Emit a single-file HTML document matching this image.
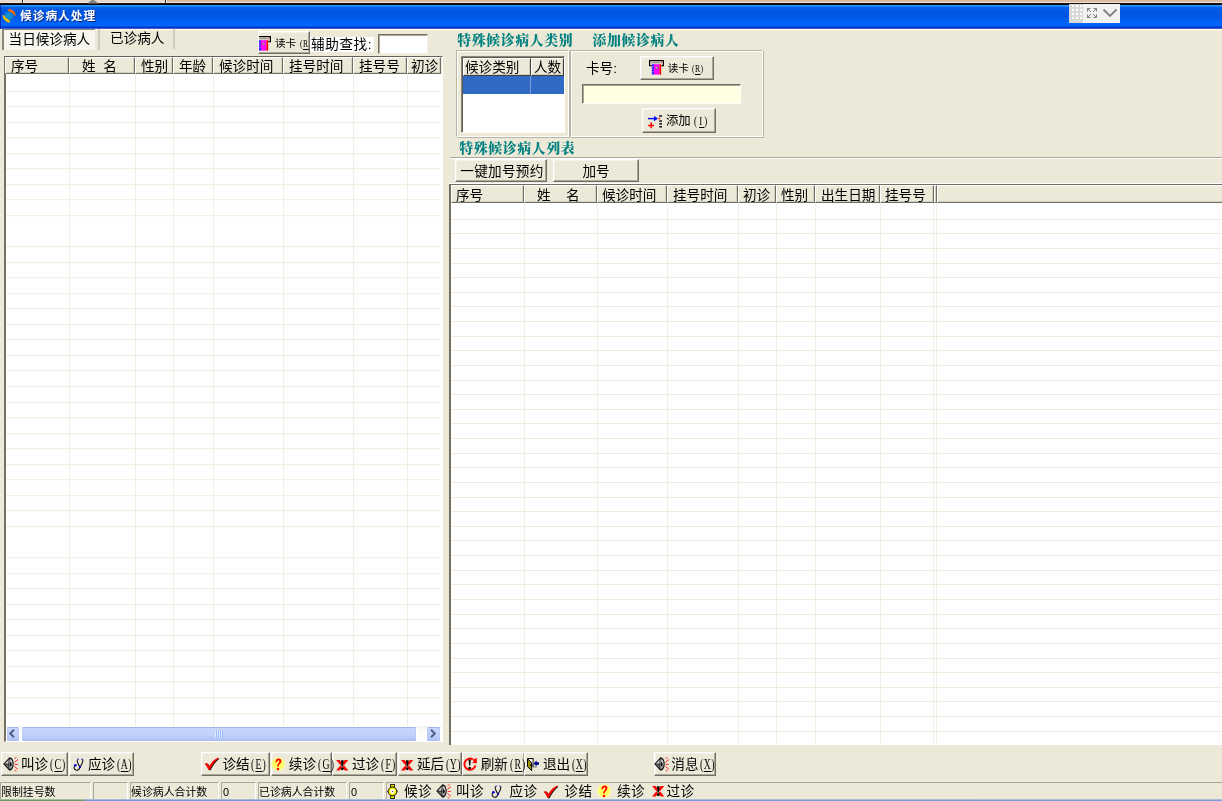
<!DOCTYPE html>
<html lang="zh-CN">
<head>
<meta charset="utf-8">
<title>候诊病人处理</title>
<style>
html,body{margin:0;padding:0;}
body{width:1222px;height:801px;overflow:hidden;background:#ece9d8;position:relative;
  font-family:"Liberation Sans","Noto Sans CJK SC",sans-serif;color:#000;}
#root{position:absolute;left:0;top:0;width:1222px;height:801px;will-change:transform;overflow:hidden;}
.abs{position:absolute;}
.t{position:absolute;white-space:nowrap;line-height:1;}
.f12{font-size:11.7px;}
.f14{font-size:13.6px;}
.lat{font-family:"Liberation Serif",serif;letter-spacing:1.6px;margin-left:1.7px;display:inline-block;transform:scaleX(0.72);transform-origin:0 50%;}
.lat u{text-decoration-thickness:1px;text-underline-offset:1.5px;}
#strip{left:0;top:0;width:1222px;height:5px;background:linear-gradient(#d8baa0 0,#d9bca3 1.5px,#f2e4d6 2px,#efdfd0 2.8px,#1a1410 3.4px,#000 4.4px,#0a1c50 5px);}
#titlebar{left:0;top:5px;width:1222px;height:24px;
  background:linear-gradient(#3a9cff 0,#2a8cfc 1px,#0664ec 2.2px,#0059e3 5px,#0055e0 10px,#005cec 14px,#0066fc 19px,#0066ff 20.6px,#0050e8 21.4px,#0034cc 22px,#0030c8 23px,#5a78d8 23.7px,#fff8dc 24px);}
#title{left:20px;top:10px;color:#fff;font-weight:bold;font-size:11.7px;letter-spacing:1px;text-shadow:1px 1px 0 #0a2a80;}
.btn{position:absolute;box-sizing:border-box;background:#ece9d8;overflow:hidden;
  border:1px solid;border-color:#fff #716f64 #716f64 #fff;
  box-shadow:inset -1px -1px 0 #aca899, inset 1px 1px 0 #f4f2e8;}
.hdr{position:absolute;box-sizing:border-box;background:#ece9d8;height:17px;
  border:1px solid;border-color:#fff #716f64 #716f64 #fff;box-shadow:inset -1px -1px 0 #d4d0bf;}
.sunk{position:absolute;box-sizing:border-box;border:1px solid;border-color:#716f64 #fff #fff #716f64;}
.vl{position:absolute;width:1px;background:#f1efe2;}
.grp{position:absolute;box-sizing:border-box;border:1px solid;border-color:#b8b5a2 #fff #fff #b8b5a2;
  box-shadow:inset 1px 1px 0 #fff, 1px 1px 0 #b8b5a2;}
.teal{color:#008080;font-weight:900;font-size:13.9px;letter-spacing:0.62px;font-family:"Liberation Serif","Noto Serif CJK SC",serif;}
.sp{position:absolute;box-sizing:border-box;top:782px;height:18px;border:1px solid;border-color:#aca899 #fff #fff #aca899;}
.sbtn{position:absolute;box-sizing:border-box;border:1px solid #fff;border-radius:2px;background:linear-gradient(#c9d6fb,#c3d2fd 50%,#b6c8f6 85%,#9db5ee);box-shadow:0 0 0 0.5px #b4c4f0 inset, 0 1px 0 #8aa3e0 inset;}
svg{position:absolute;overflow:visible;}
</style>
</head>
<body>
<div id="root">
<div class="abs" id="strip"></div>
<div class="abs" style="left:0px;top:0px;width:165px;height:3px;background:linear-gradient(#ecdcd0,#e6d3c4 55%,#f4e8dc 70%,#f0e0d2);"></div>
<div class="abs" style="left:22px;top:0px;width:1px;height:3.4px;background:#3a2e28;"></div>
<div class="abs" style="left:23px;top:0px;width:1px;height:3.2px;background:#fbf3ec;"></div>
<div class="abs" style="left:164.6px;top:0px;width:1.2px;height:3.4px;background:#3a2e28;"></div>
<div class="abs" style="left:165.8px;top:0px;width:1px;height:3.2px;background:#f4e6da;"></div>
<svg style="left:87px;top:0px;" width="12" height="4" viewBox="0 0 12 4"><path d="M0.4 3.6 L4.6 0 H7 L11.4 3.6 Z" fill="#848484"/></svg>
<div class="abs" id="titlebar"></div>
<div class="abs" style="left:0px;top:5px;width:1px;height:24px;background:rgba(0,10,120,0.55);"></div>
<div class="t" id="title">候诊病人处理</div>
<svg style="left:2px;top:8px;" width="15" height="15" viewBox="0 0 15 15"><defs><radialGradient id="gl" cx="45%" cy="50%" r="55%"><stop offset="0" stop-color="#08a4e0"/><stop offset="1" stop-color="#1068c8"/></radialGradient></defs>
<circle cx="7" cy="8" r="5.1" fill="url(#gl)"/>
<path d="M5.3 1.2 L9 1.3 L12.4 3.4 L14 7.8 L12.5 7.4 L10.6 5 L8 3.8 L6.4 3 Z" fill="#ff6a00"/>
<path d="M0.7 7 L1.7 7.1 L3.2 9.3 L5.2 10.7 L8 13 L7.9 14.4 L5 13.9 L2.2 11.5 L0.8 9 Z" fill="#ffc000"/></svg>
<div class="abs" style="left:1069px;top:4px;width:51px;height:19px;background:#f2f2f2;"></div>
<div class="abs" style="left:1069px;top:4px;width:14px;height:19px;background:#d9d9d9;"></div>
<svg style="left:1069px;top:4px;" width="51" height="19" viewBox="0 0 51 19"><g fill="#fff"><rect x="3" y="1" width="2" height="2"/><rect x="7" y="1" width="2" height="2"/><rect x="11" y="1" width="2" height="2"/>
<rect x="3" y="5" width="2" height="2"/><rect x="7" y="5" width="2" height="2"/><rect x="11" y="5" width="2" height="2"/>
<rect x="3" y="9" width="2" height="2"/><rect x="7" y="9" width="2" height="2"/><rect x="11" y="9" width="2" height="2"/>
<rect x="3" y="13" width="2" height="2"/><rect x="7" y="13" width="2" height="2"/><rect x="11" y="13" width="2" height="2"/></g>
<g stroke="#808080" stroke-width="1" fill="none">
<path d="M18.5 4.5 L22 8 M18.5 7.5 V4.5 H21.5 M27.5 4.5 L24 8 M24.5 4.5 H27.5 V7.5 M18.5 13.5 L22 10 M18.5 10.5 V13.5 H21.5 M27.5 13.5 L24 10 M27.5 10.5 V13.5 H24.5"/></g>
<path d="M34.5 5.5 L41 12 L47.5 5.5" stroke="#808080" stroke-width="1.8" fill="none"/></svg>
<div class="abs" style="left:95px;top:29px;width:1127px;height:1px;background:#fff8dc;"></div>
<div class="abs" style="left:95px;top:30px;width:1127px;height:1px;background:#f4f0de;"></div>
<div class="abs" style="left:2px;top:29px;width:93px;height:21px;background:#f6f5ee;border-left:2px solid #8b8878;border-top:1px solid #8b8878;box-sizing:border-box;"></div>
<div class="t f14" style="left:8.6px;top:33.3px;">当日候诊病人</div>
<div class="abs" style="left:98px;top:29px;width:2px;height:21px;background:#d0ccbc;"></div>
<div class="t f14" style="left:110px;top:31.8px;">已诊病人</div>
<div class="abs" style="left:173px;top:29px;width:1.5px;height:20px;background:#d0ccbc;"></div>
<div class="abs" style="left:4px;top:56px;width:439px;height:686px;box-sizing:border-box;border-left:2px solid #737166;border-top:1px solid #64625a;border-right:1px solid #fff;border-bottom:1px solid #fff;background:#fff;"></div>
<div class="abs" style="left:6px;top:76px;width:435px;height:650px;background:repeating-linear-gradient(to bottom,#fff 0,#fff 14.55px,#efecdd 14.55px,#efecdd 15.55px);background-position:0 0.2px;"></div>
<div class="abs" style="left:5px;top:57px;width:437px;height:17px;background:#ece9d8;"></div>
<div class="hdr" style="left:5px;top:57px;width:64px;height:17px;"></div>
<div class="hdr" style="left:69px;top:57px;width:66px;height:17px;"></div>
<div class="hdr" style="left:135px;top:57px;width:38px;height:17px;"></div>
<div class="hdr" style="left:173px;top:57px;width:40px;height:17px;"></div>
<div class="hdr" style="left:213px;top:57px;width:70px;height:17px;"></div>
<div class="hdr" style="left:283px;top:57px;width:70px;height:17px;"></div>
<div class="hdr" style="left:353px;top:57px;width:53.5px;height:17px;"></div>
<div class="hdr" style="left:406.5px;top:57px;width:34.5px;height:17px;"></div>
<div class="t f14" style="left:11px;top:59.8px;">序号</div>
<div class="t f14" style="left:82px;top:59.8px;">姓</div>
<div class="t f14" style="left:103.2px;top:59.8px;">名</div>
<div class="t f14" style="left:141px;top:59.8px;">性别</div>
<div class="t f14" style="left:179px;top:59.8px;">年龄</div>
<div class="t f14" style="left:219px;top:59.8px;">候诊时间</div>
<div class="t f14" style="left:289px;top:59.8px;">挂号时间</div>
<div class="t f14" style="left:359px;top:59.8px;">挂号号</div>
<div class="t f14" style="left:411px;top:59.8px;">初诊</div>
<div class="vl" style="left:69px;top:74px;width:1px;height:652px;"></div>
<div class="vl" style="left:135px;top:74px;width:1px;height:652px;"></div>
<div class="vl" style="left:173px;top:74px;width:1px;height:652px;"></div>
<div class="vl" style="left:213px;top:74px;width:1px;height:652px;"></div>
<div class="vl" style="left:283px;top:74px;width:1px;height:652px;"></div>
<div class="vl" style="left:353px;top:74px;width:1px;height:652px;"></div>
<div class="vl" style="left:406.5px;top:74px;width:1px;height:652px;"></div>
<div class="abs" style="left:6px;top:725.5px;width:436px;height:16px;background:linear-gradient(#f3f2ec,#fdfdfb 40%,#fefefc);"></div>
<div class="sbtn" style="left:5.5px;top:725.5px;width:14.5px;height:16px;"></div>
<div class="sbtn" style="left:425.5px;top:725.5px;width:15.5px;height:16px;"></div>
<div class="sbtn" style="left:21px;top:725.5px;width:396px;height:16px;"></div>
<svg style="left:8.2px;top:729px;" width="8" height="9" viewBox="0 0 8 9"><path d="M6 0.8 L2.2 4.5 L6 8.2" fill="none" stroke="#4d6185" stroke-width="2"/></svg>
<svg style="left:429px;top:729px;" width="8" height="9" viewBox="0 0 8 9"><path d="M2 0.8 L5.8 4.5 L2 8.2" fill="none" stroke="#4d6185" stroke-width="2"/></svg>
<div class="abs" style="left:215px;top:731px;width:8px;height:6px;background:repeating-linear-gradient(to right,#eef4fe 0,#eef4fe 1px,#8cb0f8 1px,#8cb0f8 2px);opacity:.8;"></div>
<div class="btn" style="left:258px;top:31px;width:52px;height:23px;">
<svg style="left:-2.6px;top:3.8px;" width="15" height="15" viewBox="0 0 15 15"><path d="M2.6 5.6 H0.6 V0.7 H14.4 V5.6 H12.4" fill="none" stroke="#000" stroke-width="1.2"/>
<path d="M2.4 2.8 H11.6" stroke="#808080" stroke-width="1"/>
<rect x="12" y="1.6" width="1" height="1.6" fill="#ff4040"/>
<rect x="2.8" y="4.2" width="2.2" height="10.4" fill="#2a2aff"/>
<rect x="5" y="4.2" width="5.4" height="10.4" fill="#ff00ff"/>
<rect x="10.4" y="4.2" width="1.8" height="10.4" fill="#ff0000"/>
<path d="M6.2 7.8 L7.6 6.6 L9 7.8 L7.6 9 Z" fill="#80c040"/>
<path d="M2.8 6.4 H5 M2.8 9 H5 M2.8 11.6 H5" stroke="#e040ff" stroke-width="0.7"/></svg>
<div class="t " style="left:16px;top:6.2px;font-size:10.6px;">读卡<span class="lat" style="margin-left:3.5px;letter-spacing:0.6px">(<u>R</u>)</span></div>
</div>
<div class="abs" style="left:310px;top:37px;width:64px;height:15px;background:#fff;"></div>
<div class="t f14" style="left:311px;top:38.3px;letter-spacing:0.6px;">辅助查找:</div>
<div class="sunk" style="left:378px;top:34px;width:50px;height:20px;background:#fff;border-color:#716f64 #f4f2e8 #f4f2e8 #716f64;box-shadow:inset 1px 1px 0 #aca899;"></div>
<div class="t teal" style="left:457.3px;top:34px;">特殊候诊病人类别</div>
<div class="t teal" style="left:592.4px;top:34px;">添加候诊病人</div>
<div class="grp" style="left:456px;top:50px;width:113px;height:87px;"></div>
<div class="grp" style="left:570px;top:50px;width:193px;height:87px;"></div>
<div class="sunk" style="left:461px;top:56px;width:104px;height:77px;background:#fff;border-color:#8c897b #fff #fff #8c897b;box-shadow:inset 1px 1px 0 #5a584f;"></div>
<div class="hdr" style="left:463px;top:58px;width:68px;height:18px;border-color:#fff #404040 #404040 #fff;"></div>
<div class="hdr" style="left:531px;top:58px;width:33px;height:18px;border-color:#fff #404040 #404040 #fff;"></div>
<div class="t f14" style="left:465px;top:60.8px;">候诊类别</div>
<div class="t f14" style="left:534px;top:60.8px;">人数</div>
<div class="abs" style="left:463px;top:76px;width:101px;height:18px;background:#316ac5;"></div>
<div class="abs" style="left:530px;top:76px;width:1px;height:18px;background:#7b9ad6;"></div>
<div class="t f14" style="left:586px;top:61.8px;">卡号:</div>
<div class="btn" style="left:640px;top:56px;width:74px;height:24px;"></div>
<svg style="left:649.1px;top:60.3px;" width="15" height="15" viewBox="0 0 15 15"><path d="M2.6 5.6 H0.6 V0.7 H14.4 V5.6 H12.4" fill="none" stroke="#000" stroke-width="1.2"/>
<path d="M2.4 2.8 H11.6" stroke="#808080" stroke-width="1"/>
<rect x="12" y="1.6" width="1" height="1.6" fill="#ff4040"/>
<rect x="2.8" y="4.2" width="2.2" height="10.4" fill="#2a2aff"/>
<rect x="5" y="4.2" width="5.4" height="10.4" fill="#ff00ff"/>
<rect x="10.4" y="4.2" width="1.8" height="10.4" fill="#ff0000"/>
<path d="M6.2 7.8 L7.6 6.6 L9 7.8 L7.6 9 Z" fill="#80c040"/>
<path d="M2.8 6.4 H5 M2.8 9 H5 M2.8 11.6 H5" stroke="#e040ff" stroke-width="0.7"/></svg>
<div class="t " style="left:667.7px;top:63px;font-size:10.6px;">读卡<span class="lat" style="margin-left:3px;letter-spacing:0.6px">(<u>R</u>)</span></div>
<div class="sunk" style="left:582px;top:84px;width:159px;height:20px;background:#ffffe1;border-color:#716f64 #fff #fff #716f64;box-shadow:inset 1px 1px 0 #aca899;"></div>
<div class="btn" style="left:642px;top:108px;width:74px;height:25px;"></div>
<svg style="left:648px;top:113.5px;" width="15" height="15" viewBox="0 0 15 15"><path d="M0 4.6 H7" stroke="#0000ff" stroke-width="1.4"/><path d="M6 2 L10 4.6 L6 7.2 Z" fill="#0000ff"/>
<circle cx="11.3" cy="4.5" r="0.9" fill="#ff2020"/>
<path d="M0.2 11.4 H6 M3.1 8.6 V14.2" stroke="#ff0000" stroke-width="1.5"/>
<g fill="#111"><rect x="11.2" y="1.2" width="2.8" height="1.5"/><rect x="11.2" y="6.3" width="2.8" height="1.5"/><rect x="11.2" y="9.1" width="2.8" height="1.5"/><rect x="11.2" y="12" width="2.8" height="1.5"/></g></svg>
<div class="t " style="left:665.9px;top:115px;font-size:12.4px;">添加<span class="lat" style="margin-left:3px;letter-spacing:3px">(<u>I</u>)</span></div>
<div class="t teal" style="left:459.3px;top:142px;">特殊候诊病人列表</div>
<div class="abs" style="left:450px;top:157px;width:772px;height:1px;background:#aca899;"></div>
<div class="abs" style="left:450px;top:158px;width:772px;height:1px;background:#fff;"></div>
<div class="btn" style="left:455px;top:159px;width:92px;height:23px;"></div>
<div class="t f14" style="left:460.3px;top:165.0px;letter-spacing:0.3px;">一键加号预约</div>
<div class="btn" style="left:553px;top:159px;width:86px;height:23px;"></div>
<div class="t f14" style="left:582.4px;top:164.8px;">加号</div>
<div class="abs" style="left:449px;top:183px;width:773px;height:1px;background:#fff;"></div>
<div class="abs" style="left:449px;top:184px;width:773px;height:561px;background:#fff;border-left:2px solid #716f64;border-top:1px solid #716f64;box-sizing:border-box;"></div>
<div class="abs" style="left:451px;top:205px;width:771px;height:539px;background:repeating-linear-gradient(to bottom,#fff 0,#fff 13.63px,#efecdd 13.63px,#efecdd 14.63px);background-position:0 0px;"></div>
<div class="abs" style="left:451px;top:185px;width:771px;height:18px;background:#ece9d8;border-bottom:1px solid #716f64;box-sizing:border-box;"></div>
<div class="hdr" style="left:451px;top:185px;width:73px;height:18px;"></div>
<div class="hdr" style="left:524px;top:185px;width:73px;height:18px;"></div>
<div class="hdr" style="left:597px;top:185px;width:70px;height:18px;"></div>
<div class="hdr" style="left:667px;top:185px;width:71px;height:18px;"></div>
<div class="hdr" style="left:738px;top:185px;width:38px;height:18px;"></div>
<div class="hdr" style="left:776px;top:185px;width:39px;height:18px;"></div>
<div class="hdr" style="left:815px;top:185px;width:65px;height:18px;"></div>
<div class="hdr" style="left:880px;top:185px;width:54px;height:18px;"></div>
<div class="hdr" style="left:934px;top:185px;width:3px;height:18px;"></div>
<div class="hdr" style="left:937px;top:185px;width:290px;height:18px;"></div>
<div class="t f14" style="left:456px;top:188.8px;">序号</div>
<div class="t f14" style="left:537px;top:188.8px;">姓</div>
<div class="t f14" style="left:566px;top:188.8px;">名</div>
<div class="t f14" style="left:602px;top:188.8px;">候诊时间</div>
<div class="t f14" style="left:673px;top:188.8px;">挂号时间</div>
<div class="t f14" style="left:743px;top:188.8px;">初诊</div>
<div class="t f14" style="left:781px;top:188.8px;">性别</div>
<div class="t f14" style="left:821px;top:188.8px;">出生日期</div>
<div class="t f14" style="left:885px;top:188.8px;">挂号号</div>
<div class="vl" style="left:524px;top:203px;width:1px;height:541px;"></div>
<div class="vl" style="left:597px;top:203px;width:1px;height:541px;"></div>
<div class="vl" style="left:667px;top:203px;width:1px;height:541px;"></div>
<div class="vl" style="left:738px;top:203px;width:1px;height:541px;"></div>
<div class="vl" style="left:776px;top:203px;width:1px;height:541px;"></div>
<div class="vl" style="left:815px;top:203px;width:1px;height:541px;"></div>
<div class="vl" style="left:880px;top:203px;width:1px;height:541px;"></div>
<div class="vl" style="left:933px;top:203px;width:1px;height:541px;"></div>
<div class="vl" style="left:936px;top:203px;width:1px;height:541px;"></div>
<div class="btn" style="left:1px;top:752px;width:67px;height:24px;"></div>
<div class="btn" style="left:69px;top:752px;width:65px;height:24px;"></div>
<div class="btn" style="left:201px;top:752px;width:69px;height:24px;"></div>
<div class="btn" style="left:271px;top:752px;width:61px;height:24px;"></div>
<div class="btn" style="left:332px;top:752px;width:65px;height:24px;"></div>
<div class="btn" style="left:398px;top:752px;width:64px;height:24px;"></div>
<div class="btn" style="left:462px;top:752px;width:62.5px;height:24px;"></div>
<div class="btn" style="left:524px;top:752px;width:64px;height:24px;"></div>
<div class="btn" style="left:654px;top:752px;width:62px;height:24px;"></div>
<svg style="left:3.2px;top:757px;" width="16" height="14" viewBox="0 0 16 14"><path d="M0.2 7 L6.2 0.4 C8 -0.4 10.7 2.5 10.7 7 C10.7 11.5 8 14.4 6.2 13.6 Z" fill="#161616"/>
<path d="M1.8 6.8 L5.8 2.4 L5.4 6.8 Z" fill="#c8c8c8"/><path d="M1.8 7.4 L5.4 7.4 L5.8 11.6 Z" fill="#6e6e6e"/>
<path d="M6.8 1.8 C8.6 2.2 9.7 4.4 9.7 7 C9.7 9.6 8.6 11.8 6.8 12.2 C6 10 6 4 6.8 1.8 Z" fill="#a8a8a8"/>
<path d="M7.2 2.6 C8.2 3 9 4.6 9.1 6.4 L8.2 6.2 C8.1 4.8 7.8 3.6 7.2 2.6 Z" fill="#f4f4f4"/>
<ellipse cx="7.7" cy="7.2" rx="0.9" ry="2.3" fill="#0c0c0c"/>
<g stroke="#ff2a2a" stroke-width="1" fill="none"><path d="M11.6 7.4 H14.8 M11.4 5.4 L15 2.4 M11.4 9.4 L15 12.4 M11.6 1.6 L13.4 0.4 M11.6 13.2 L13.4 14.2"/></g></svg>
<div class="t f14" style="left:21px;top:757.5px;">叫诊<span class="lat">(<u>C</u>)</span></div>
<svg style="left:72.5px;top:757.5px;" width="11" height="13" viewBox="0 0 11 13"><g fill="none" stroke="#111" stroke-width="1.1" stroke-linecap="round">
<path d="M4.6 1.6 C3.6 2.6 4.4 5 7 9.2"/><path d="M9.6 1.6 C10.6 3.6 8.6 6.4 7 9.2"/>
<path d="M7 9.2 C6.6 11.6 4.6 12.6 2.8 12 C0.8 11.2 0.6 8.8 2 7.4"/></g>
<circle cx="2.4" cy="7.2" r="1.3" fill="#0000e0"/><circle cx="7" cy="9" r="1.1" fill="#0000e0"/>
<rect x="4.6" y="0.6" width="1.4" height="1" fill="#2030ff"/><rect x="8.2" y="0.6" width="1.4" height="1" fill="#2030ff"/></svg>
<div class="t f14" style="left:88px;top:757.5px;">应诊<span class="lat" style="letter-spacing:0.7px">(<u>A</u>)</span></div>
<svg style="left:203.8px;top:757.1px;" width="15" height="13" viewBox="0 0 15 13"><path d="M1.2 7 L4 6.8 L6 9.4 C8.2 5.4 11.2 2.4 15 0.9 L15.2 1.9 C11.6 4.6 8.8 8.6 6.6 13.2 L5 13.2 C4 10.8 2.8 8.8 1.2 7 Z" fill="#111"/>
<path d="M0.5 6.6 L3.3 6.3 L5.3 8.9 C7.5 4.9 10.5 1.9 14.3 0.4 L14.5 1.4 C10.9 4.1 8.1 8.1 5.9 12.7 L4.3 12.7 C3.3 10.3 2.1 8.3 0.5 6.6 Z" fill="#ff0000"/></svg>
<div class="t f14" style="left:222.5px;top:757.5px;">诊结<span class="lat">(<u>E</u>)</span></div>
<svg style="left:270.9px;top:757px;" width="15" height="14" viewBox="0 0 15 14"><circle cx="7.2" cy="7" r="7" fill="#fbfaa0"/><circle cx="7.2" cy="7" r="5.6" fill="#ffff60"/>
<path d="M4.6 5.2 C4.4 2.6 6 1.6 7.6 1.6 C9.4 1.6 10.6 2.8 10.4 4.4 C10.2 6 8.4 6.6 8 8 L7.8 9.6 L6.4 9.6 C6.2 8 6.6 7 7.6 6 C8.6 5 8.8 3.4 7.6 3.2 C6.6 3.1 6.2 4 6.2 5.2 Z" fill="#ff0000"/>
<circle cx="7" cy="12" r="1.3" fill="#ff0000"/></svg>
<div class="t f14" style="left:288.8px;top:757.5px;">续诊<span class="lat">(<u>G</u>)</span></div>
<svg style="left:335.8px;top:759.8px;" width="13" height="11" viewBox="0 0 13 11"><path d="M0.1 0 H3.6 L12.3 10.4 H8.8 Z M12.3 0 H8.8 L0.1 10.4 H3.6 Z" fill="#ff0000"/>
<path d="M5 0.2 H7.6 L7.1 6.4 H5.5 Z" fill="#000"/><circle cx="6.3" cy="8.8" r="1.4" fill="#000"/></svg>
<div class="t f14" style="left:352px;top:757.5px;">过诊<span class="lat">(<u>F</u>)</span></div>
<svg style="left:401.2px;top:759.8px;" width="13" height="11" viewBox="0 0 13 11"><path d="M0.1 0 H3.6 L12.3 10.4 H8.8 Z M12.3 0 H8.8 L0.1 10.4 H3.6 Z" fill="#ff0000"/>
<path d="M5 0.2 H7.6 L7.1 6.4 H5.5 Z" fill="#000"/><circle cx="6.3" cy="8.8" r="1.4" fill="#000"/></svg>
<div class="t f14" style="left:417px;top:757.5px;">延后<span class="lat" style="letter-spacing:0.7px">(<u>Y</u>)</span></div>
<svg style="left:463px;top:757px;" width="14" height="14" viewBox="0 0 14 14"><path d="M12.4 8.6 A5.6 5.6 0 1 1 9.8 2.4" fill="none" stroke="#ff0000" stroke-width="2"/>
<path d="M13.8 1 L13.8 6.2 L8.8 6 L11 4.4 L9.4 2.8 Z" fill="#ff0000"/>
<path d="M5.6 2.6 H7.8 L7.3 8.4 H6.1 Z" fill="#000"/><circle cx="6.7" cy="11" r="1.3" fill="#000"/></svg>
<div class="t f14" style="left:480.7px;top:757.5px;">刷新<span class="lat">(<u>R</u>)</span></div>
<svg style="left:527px;top:758px;" width="13" height="13" viewBox="0 0 13 13"><path d="M0.6 0.6 H6 V9" fill="none" stroke="#000" stroke-width="1.1"/>
<path d="M1.2 1.2 H5.4 V6 Z" fill="#fff"/>
<path d="M0.5 0.8 L4.6 4.6 V12.6 L0.5 8.6 Z" fill="#9c9400" stroke="#000" stroke-width="1"/>
<rect x="3.2" y="6.6" width="0.9" height="1.4" fill="#000"/>
<path d="M6 9 H9.8" stroke="#666" stroke-width="1"/>
<path d="M6.6 5.4 L9.4 2.6 L9.8 4.2 H12 V6.8 H9.8 L9.4 8.2 Z" fill="#00008b"/></svg>
<div class="t f14" style="left:543px;top:757.5px;">退出<span class="lat" style="letter-spacing:0.7px">(<u>X</u>)</span></div>
<svg style="left:654.3px;top:757px;" width="16" height="14" viewBox="0 0 16 14"><path d="M0.2 7 L6.2 0.4 C8 -0.4 10.7 2.5 10.7 7 C10.7 11.5 8 14.4 6.2 13.6 Z" fill="#161616"/>
<path d="M1.8 6.8 L5.8 2.4 L5.4 6.8 Z" fill="#c8c8c8"/><path d="M1.8 7.4 L5.4 7.4 L5.8 11.6 Z" fill="#6e6e6e"/>
<path d="M6.8 1.8 C8.6 2.2 9.7 4.4 9.7 7 C9.7 9.6 8.6 11.8 6.8 12.2 C6 10 6 4 6.8 1.8 Z" fill="#a8a8a8"/>
<path d="M7.2 2.6 C8.2 3 9 4.6 9.1 6.4 L8.2 6.2 C8.1 4.8 7.8 3.6 7.2 2.6 Z" fill="#f4f4f4"/>
<ellipse cx="7.7" cy="7.2" rx="0.9" ry="2.3" fill="#0c0c0c"/>
<g stroke="#ff2a2a" stroke-width="1" fill="none"><path d="M11.6 7.4 H14.8 M11.4 5.4 L15 2.4 M11.4 9.4 L15 12.4 M11.6 1.6 L13.4 0.4 M11.6 13.2 L13.4 14.2"/></g></svg>
<div class="t f14" style="left:671.3px;top:757.5px;">消息<span class="lat" style="letter-spacing:0.7px">(<u>X</u>)</span></div>
<div class="sp" style="left:0px;top:782px;width:91px;height:18px;"></div>
<div class="sp" style="left:93px;top:782px;width:35px;height:18px;"></div>
<div class="sp" style="left:130px;top:782px;width:89px;height:18px;"></div>
<div class="sp" style="left:221px;top:782px;width:35px;height:18px;"></div>
<div class="sp" style="left:258px;top:782px;width:89px;height:18px;"></div>
<div class="sp" style="left:349px;top:782px;width:35px;height:18px;"></div>
<div class="sp" style="left:386px;top:782px;width:836px;height:18px;border-right:none;"></div>
<div class="t " style="left:1px;top:786.6px;font-size:10.9px;">限制挂号数</div>
<div class="t " style="left:131px;top:786.6px;font-size:10.9px;">候诊病人合计数</div>
<div class="t " style="left:223px;top:786.6px;font-size:10.9px;">0</div>
<div class="t " style="left:259px;top:786.6px;font-size:10.9px;">已诊病人合计数</div>
<div class="t " style="left:351px;top:786.6px;font-size:10.9px;">0</div>
<svg style="left:387px;top:783.7px;" width="11" height="15" viewBox="0 0 11 15"><rect x="3.6" y="0.4" width="3.8" height="3" fill="#e8e000" stroke="#000" stroke-width="0.8"/>
<rect x="3.6" y="11.4" width="3.8" height="3.2" fill="#e8e000" stroke="#000" stroke-width="0.8"/>
<path d="M0.2 7.4 L1.4 6.2 V8.6 Z M10.8 7.4 L9.6 6.2 V8.6 Z" fill="#000"/>
<circle cx="5.5" cy="7.4" r="4.4" fill="#f4f000" stroke="#000" stroke-width="0.9"/>
<circle cx="5.5" cy="7.4" r="2.4" fill="#fffef0"/><circle cx="5.5" cy="7.4" r="0.6" fill="#555"/></svg>
<div class="t f14" style="left:404px;top:784.8px;letter-spacing:0.5px;">候诊</div>
<svg style="left:436px;top:784px;" width="16" height="14" viewBox="0 0 16 14"><path d="M0.2 7 L6.2 0.4 C8 -0.4 10.7 2.5 10.7 7 C10.7 11.5 8 14.4 6.2 13.6 Z" fill="#161616"/>
<path d="M1.8 6.8 L5.8 2.4 L5.4 6.8 Z" fill="#c8c8c8"/><path d="M1.8 7.4 L5.4 7.4 L5.8 11.6 Z" fill="#6e6e6e"/>
<path d="M6.8 1.8 C8.6 2.2 9.7 4.4 9.7 7 C9.7 9.6 8.6 11.8 6.8 12.2 C6 10 6 4 6.8 1.8 Z" fill="#a8a8a8"/>
<path d="M7.2 2.6 C8.2 3 9 4.6 9.1 6.4 L8.2 6.2 C8.1 4.8 7.8 3.6 7.2 2.6 Z" fill="#f4f4f4"/>
<ellipse cx="7.7" cy="7.2" rx="0.9" ry="2.3" fill="#0c0c0c"/>
<g stroke="#ff2a2a" stroke-width="1" fill="none"><path d="M11.6 7.4 H14.8 M11.4 5.4 L15 2.4 M11.4 9.4 L15 12.4 M11.6 1.6 L13.4 0.4 M11.6 13.2 L13.4 14.2"/></g></svg>
<div class="t f14" style="left:456px;top:784.8px;letter-spacing:0.5px;">叫诊</div>
<svg style="left:491px;top:784.5px;" width="11" height="13" viewBox="0 0 11 13"><g fill="none" stroke="#111" stroke-width="1.1" stroke-linecap="round">
<path d="M4.6 1.6 C3.6 2.6 4.4 5 7 9.2"/><path d="M9.6 1.6 C10.6 3.6 8.6 6.4 7 9.2"/>
<path d="M7 9.2 C6.6 11.6 4.6 12.6 2.8 12 C0.8 11.2 0.6 8.8 2 7.4"/></g>
<circle cx="2.4" cy="7.2" r="1.3" fill="#0000e0"/><circle cx="7" cy="9" r="1.1" fill="#0000e0"/>
<rect x="4.6" y="0.6" width="1.4" height="1" fill="#2030ff"/><rect x="8.2" y="0.6" width="1.4" height="1" fill="#2030ff"/></svg>
<div class="t f14" style="left:509.5px;top:784.8px;letter-spacing:0.5px;">应诊</div>
<svg style="left:543.4px;top:784.7px;" width="15" height="13" viewBox="0 0 15 13"><path d="M1.2 7 L4 6.8 L6 9.4 C8.2 5.4 11.2 2.4 15 0.9 L15.2 1.9 C11.6 4.6 8.8 8.6 6.6 13.2 L5 13.2 C4 10.8 2.8 8.8 1.2 7 Z" fill="#111"/>
<path d="M0.5 6.6 L3.3 6.3 L5.3 8.9 C7.5 4.9 10.5 1.9 14.3 0.4 L14.5 1.4 C10.9 4.1 8.1 8.1 5.9 12.7 L4.3 12.7 C3.3 10.3 2.1 8.3 0.5 6.6 Z" fill="#ff0000"/></svg>
<div class="t f14" style="left:564.3px;top:784.8px;letter-spacing:0.5px;">诊结</div>
<svg style="left:597px;top:783.5px;" width="15" height="14" viewBox="0 0 15 14"><circle cx="7.2" cy="7" r="7" fill="#fbfaa0"/><circle cx="7.2" cy="7" r="5.6" fill="#ffff60"/>
<path d="M4.6 5.2 C4.4 2.6 6 1.6 7.6 1.6 C9.4 1.6 10.6 2.8 10.4 4.4 C10.2 6 8.4 6.6 8 8 L7.8 9.6 L6.4 9.6 C6.2 8 6.6 7 7.6 6 C8.6 5 8.8 3.4 7.6 3.2 C6.6 3.1 6.2 4 6.2 5.2 Z" fill="#ff0000"/>
<circle cx="7" cy="12" r="1.3" fill="#ff0000"/></svg>
<div class="t f14" style="left:617px;top:784.8px;letter-spacing:0.5px;">续诊</div>
<svg style="left:651.5px;top:786.2px;" width="13" height="11" viewBox="0 0 13 11"><path d="M0.1 0 H3.6 L12.3 10.4 H8.8 Z M12.3 0 H8.8 L0.1 10.4 H3.6 Z" fill="#ff0000"/>
<path d="M5 0.2 H7.6 L7.1 6.4 H5.5 Z" fill="#000"/><circle cx="6.3" cy="8.8" r="1.4" fill="#000"/></svg>
<div class="t f14" style="left:666.4px;top:784.8px;letter-spacing:0.5px;">过诊</div>
<div class="abs" style="left:0px;top:799px;width:1222px;height:2px;background:linear-gradient(to right,#6a9a6a 0,#6a9a6a 82px,#7396dc 87px,#7b9be0 100%);"></div>
<div class="abs" style="left:0px;top:799px;width:1222px;height:1px;background:rgba(236,233,216,0.45);"></div>
</div>
</body>
</html>
